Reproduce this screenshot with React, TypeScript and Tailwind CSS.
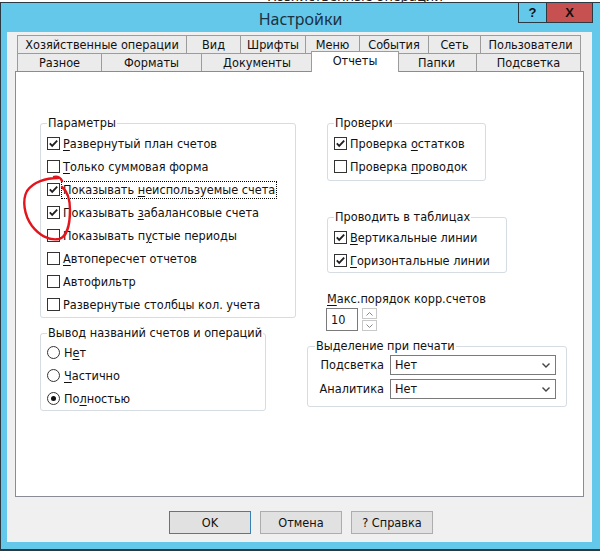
import React from "react";

const F = "font-['DejaVu_Sans_Condensed','DejaVu_Sans',sans-serif]";

type Lb = { a: string; u?: string; b?: string };

function Label({ a, u, b }: Lb) {
  return (
    <span className="whitespace-nowrap">
      {a}
      {u && <span className="underline underline-offset-2">{u}</span>}
      {b}
    </span>
  );
}

function Check({ on }: { on: boolean }) {
  return (
    <span className="w-[13px] h-[13px] shrink-0 border border-[#333] bg-white flex items-center justify-center">
      {on && (
        <svg width="11" height="11" viewBox="0 0 11 11">
          <path d="M1.8 5.4 L4.2 7.9 L9.2 2.6" fill="none" stroke="#1f1f1f" strokeWidth="1.8" />
        </svg>
      )}
    </span>
  );
}

function Radio({ on }: { on: boolean }) {
  return (
    <span className="w-[13px] h-[13px] shrink-0 rounded-full border border-[#333] bg-white flex items-center justify-center">
      {on && <span className="w-[5px] h-[5px] rounded-full bg-[#111]" />}
    </span>
  );
}

function CRow({ on, l, focus }: { on: boolean; l: Lb; focus?: boolean }) {
  return (
    <div className="h-[23px] flex items-center gap-[3px]">
      <Check on={on} />
      {focus ? (
        <span className="outline-1 outline-dotted outline-black outline-offset-1">
          <Label {...l} />
        </span>
      ) : (
        <Label {...l} />
      )}
    </div>
  );
}

function RRow({ on, l }: { on: boolean; l: Lb }) {
  return (
    <div className="h-[23px] flex items-center gap-[4px]">
      <Radio on={on} />
      <Label {...l} />
    </div>
  );
}

function Combo() {
  return (
    <div className="w-[166px] h-[20px] border border-[#7a7a7a] bg-white flex items-center justify-between pl-[4px] pr-[5px]">
      <span>Нет</span>
      <svg width="8" height="5" viewBox="0 0 8 5">
        <path d="M0.5 0.5 L4 4 L7.5 0.5" fill="none" stroke="#444" strokeWidth="1.4" />
      </svg>
    </div>
  );
}

const row1 = [
  ["Хозяйственные операции", 170],
  ["Вид", 54],
  ["Шрифты", 65],
  ["Меню", 54],
  ["События", 69],
  ["Сеть", 52],
  ["Пользователи", 100],
] as const;

const row2 = [
  ["Разное", 85],
  ["Форматы", 100],
  ["Документы", 111],
  ["Отчеты", 84],
  ["Папки", 80],
  ["Подсветка", 104],
] as const;

const widthCls: Record<number, string> = {
  170: "w-[170px]",
  54: "w-[54px]",
  65: "w-[65px]",
  69: "w-[69px]",
  52: "w-[52px]",
  100: "w-[100px]",
  85: "w-[85px]",
  111: "w-[111px]",
  84: "w-[84px]",
  80: "w-[80px]",
  104: "w-[104px]",
};

export default function App() {
  return (
    <div className={`w-[600px] h-[551px] bg-white relative overflow-hidden text-[#111] text-[12.6px] leading-[14px] ${F}`}>
      <div className="h-[2px] overflow-hidden flex">
        <span className="ml-[268px] -mt-[11px] text-[14px] leading-[14px] font-['Noto_Sans',sans-serif] text-[#222] whitespace-nowrap">
          Хозяйственные операции
        </span>
      </div>
      <div className="h-[549px] bg-[#64c8ea] border-t border-l border-b-2 border-[#2b3a42] flex flex-col">
        <div className="h-[29px] shrink-0 relative flex items-center justify-center">
          <span className="text-[16px] leading-[18px] text-[#1b3243] font-['Noto_Sans',sans-serif] mt-[2px]">Настройки</span>
          <div className="absolute top-0 right-[7px] flex">
            <div className="w-[29px] h-[20px] border border-t-0 border-[#2b3a42] flex items-center justify-center text-[13px] font-bold font-['Liberation_Sans',sans-serif]">
              ?
            </div>
            <div className="w-[46px] h-[20px] border border-t-0 border-l-0 border-[#2b3a42] bg-[#c75050] flex items-center justify-center text-[13px] font-bold font-['Liberation_Sans',sans-serif]">
              X
            </div>
          </div>
        </div>
        <div className="ml-[6px] w-[585px] h-[510px] shrink-0 bg-[#f0f0f0] px-[8px] pt-[3px] flex flex-col">
          <div className="px-[2px] flex flex-col">
            <div className="h-[18px] flex">
              {row1.map(([t, w], i) => (
                <div
                  key={t}
                  className={`${widthCls[w]} h-[18px] border-t border-r ${i === 0 ? "border-l" : ""} border-[#9c9c9c] bg-[#ebebeb] flex items-center justify-center whitespace-nowrap`}
                >
                  {t}
                </div>
              ))}
            </div>
            <div className="h-[18px] flex items-end">
              {row2.map(([t, w], i) =>
                t === "Отчеты" ? (
                  <div
                    key={t}
                    className="w-[88px] -mx-[2px] h-[21px] relative top-[1px] z-10 border border-b-0 border-[#9c9c9c] bg-white flex items-start justify-center pt-[2px]"
                  >
                    {t}
                  </div>
                ) : (
                  <div
                    key={t}
                    className={`${widthCls[w]} h-[18px] border-t border-r ${i === 0 ? "border-l" : ""} border-[#9c9c9c] bg-[#ebebeb] flex items-center justify-center whitespace-nowrap`}
                  >
                    {t}
                  </div>
                )
              )}
            </div>
          </div>
          <div className="h-[426px] border border-[#898c95] bg-white flex items-start pt-[44px]">
            <div className="ml-[24px] w-[256px] flex flex-col">
              <fieldset className="min-w-0 border border-[#d5dce2] rounded-[3px] px-[6px] pt-[2px] pb-[1px]">
                <legend className="px-[1px] leading-[14px]">Параметры</legend>
                <CRow on l={{ a: "", u: "Р", b: "азвернутый план счетов" }} />
                <CRow on={false} l={{ a: "", u: "Т", b: "олько суммовая форма" }} />
                <CRow on focus l={{ a: "Показывать ", u: "н", b: "еиспользуемые счета" }} />
                <CRow on l={{ a: "Показывать ", u: "з", b: "абалансовые счета" }} />
                <CRow on={false} l={{ a: "Показывать п", u: "у", b: "стые периоды" }} />
                <CRow on={false} l={{ a: "", u: "А", b: "втопересчет отчетов" }} />
                <CRow on={false} l={{ a: "Автофильтр" }} />
                <CRow on={false} l={{ a: "Развернутые столбцы кол. учета" }} />
              </fieldset>
              <fieldset className="min-w-0 mt-[8px] w-[226px] border border-[#d5dce2] rounded-[3px] px-[6px] pt-[1px]">
                <legend className="px-[1px] leading-[14px] whitespace-nowrap">Вывод названий счетов и операций</legend>
                <RRow on={false} l={{ a: "Н", u: "е", b: "т" }} />
                <RRow on={false} l={{ a: "", u: "Ч", b: "астично" }} />
                <RRow on l={{ a: "По", u: "л", b: "ностью" }} />
              </fieldset>
            </div>
            <div className="ml-[11px] w-[260px] flex flex-col">
              <fieldset className="min-w-0 ml-[20px] w-[159px] border border-[#d5dce2] rounded-[3px] px-[6px] pt-[2px] pb-[2px]">
                <legend className="px-[1px] leading-[14px]">Проверки</legend>
                <CRow on l={{ a: "Проверка ", u: "о", b: "статков" }} />
                <CRow on={false} l={{ a: "Проверка ", u: "п", b: "роводок" }} />
              </fieldset>
              <fieldset className="min-w-0 ml-[20px] mt-[29px] w-[180px] border border-[#d5dce2] rounded-[3px] px-[6px] pt-[2px]">
                <legend className="px-[1px] leading-[14px]">Проводить в таблицах</legend>
                <CRow on l={{ a: "", u: "В", b: "ертикальные линии" }} />
                <CRow on l={{ a: "", u: "Г", b: "оризонтальные линии" }} />
              </fieldset>
              <div className="ml-[20px] mt-[19px] leading-[14px]">
                <Label a="" u="М" b="акс.порядок корр.счетов" />
              </div>
              <div className="ml-[19px] mt-[2px] flex items-start gap-[4px]">
                <div className="w-[32px] h-[23px] border border-[#7a7a7a] bg-white flex items-center pl-[4px]">10</div>
                <div className="flex flex-col gap-[1px]">
                  <div className="w-[15px] h-[11px] border border-[#c8c8c8] bg-white flex items-center justify-center">
                    <svg width="7" height="4" viewBox="0 0 7 4">
                      <path d="M0.5 3.5 L3.5 0.5 L6.5 3.5" fill="none" stroke="#888" strokeWidth="1" />
                    </svg>
                  </div>
                  <div className="w-[15px] h-[11px] border border-[#c8c8c8] bg-white flex items-center justify-center">
                    <svg width="7" height="4" viewBox="0 0 7 4">
                      <path d="M0.5 0.5 L3.5 3.5 L6.5 0.5" fill="none" stroke="#888" strokeWidth="1" />
                    </svg>
                  </div>
                </div>
              </div>
              <fieldset className="min-w-0 mt-[8px] w-[260px] border border-[#d5dce2] rounded-[3px] px-[7px] pt-[2px] pb-[7px]">
                <legend className="px-[1px] leading-[14px]">Выделение при печати</legend>
                <div className="flex flex-col gap-[4px]">
                  <div className="flex items-center">
                    <span className="w-[75px] pr-[6px] text-right whitespace-nowrap">Подсветка</span>
                    <Combo />
                  </div>
                  <div className="flex items-center">
                    <span className="w-[75px] pr-[6px] text-right whitespace-nowrap">Аналитика</span>
                    <Combo />
                  </div>
                </div>
              </fieldset>
            </div>
          </div>
          <div className="mt-[14px] pl-[154px] flex gap-[9px]">
            <div className="w-[82px] h-[23px] border border-[#3c7fb1] bg-[#e1e1e1] flex items-center justify-center">OK</div>
            <div className="w-[82px] h-[23px] border border-[#adadad] bg-[#e1e1e1] flex items-center justify-center">Отмена</div>
            <div className="w-[82px] h-[23px] border border-[#adadad] bg-[#e1e1e1] flex items-center justify-center">? Справка</div>
          </div>
        </div>
      </div>
      <svg className="absolute left-0 top-0 pointer-events-none" width="600" height="551" viewBox="0 0 600 551">
        <path
          d="M54 177 C 58 176, 61 178, 62 181 M58 178 C 46 178, 33 182, 27 191 C 22 200, 24 215, 32 226 C 39 235, 49 241, 59 239 C 67 237, 70 224, 70 210 C 70 199, 67 191, 62 187"
          fill="none"
          stroke="#e3141c"
          strokeWidth="2.4"
          strokeLinecap="round"
        />
      </svg>
    </div>
  );
}
